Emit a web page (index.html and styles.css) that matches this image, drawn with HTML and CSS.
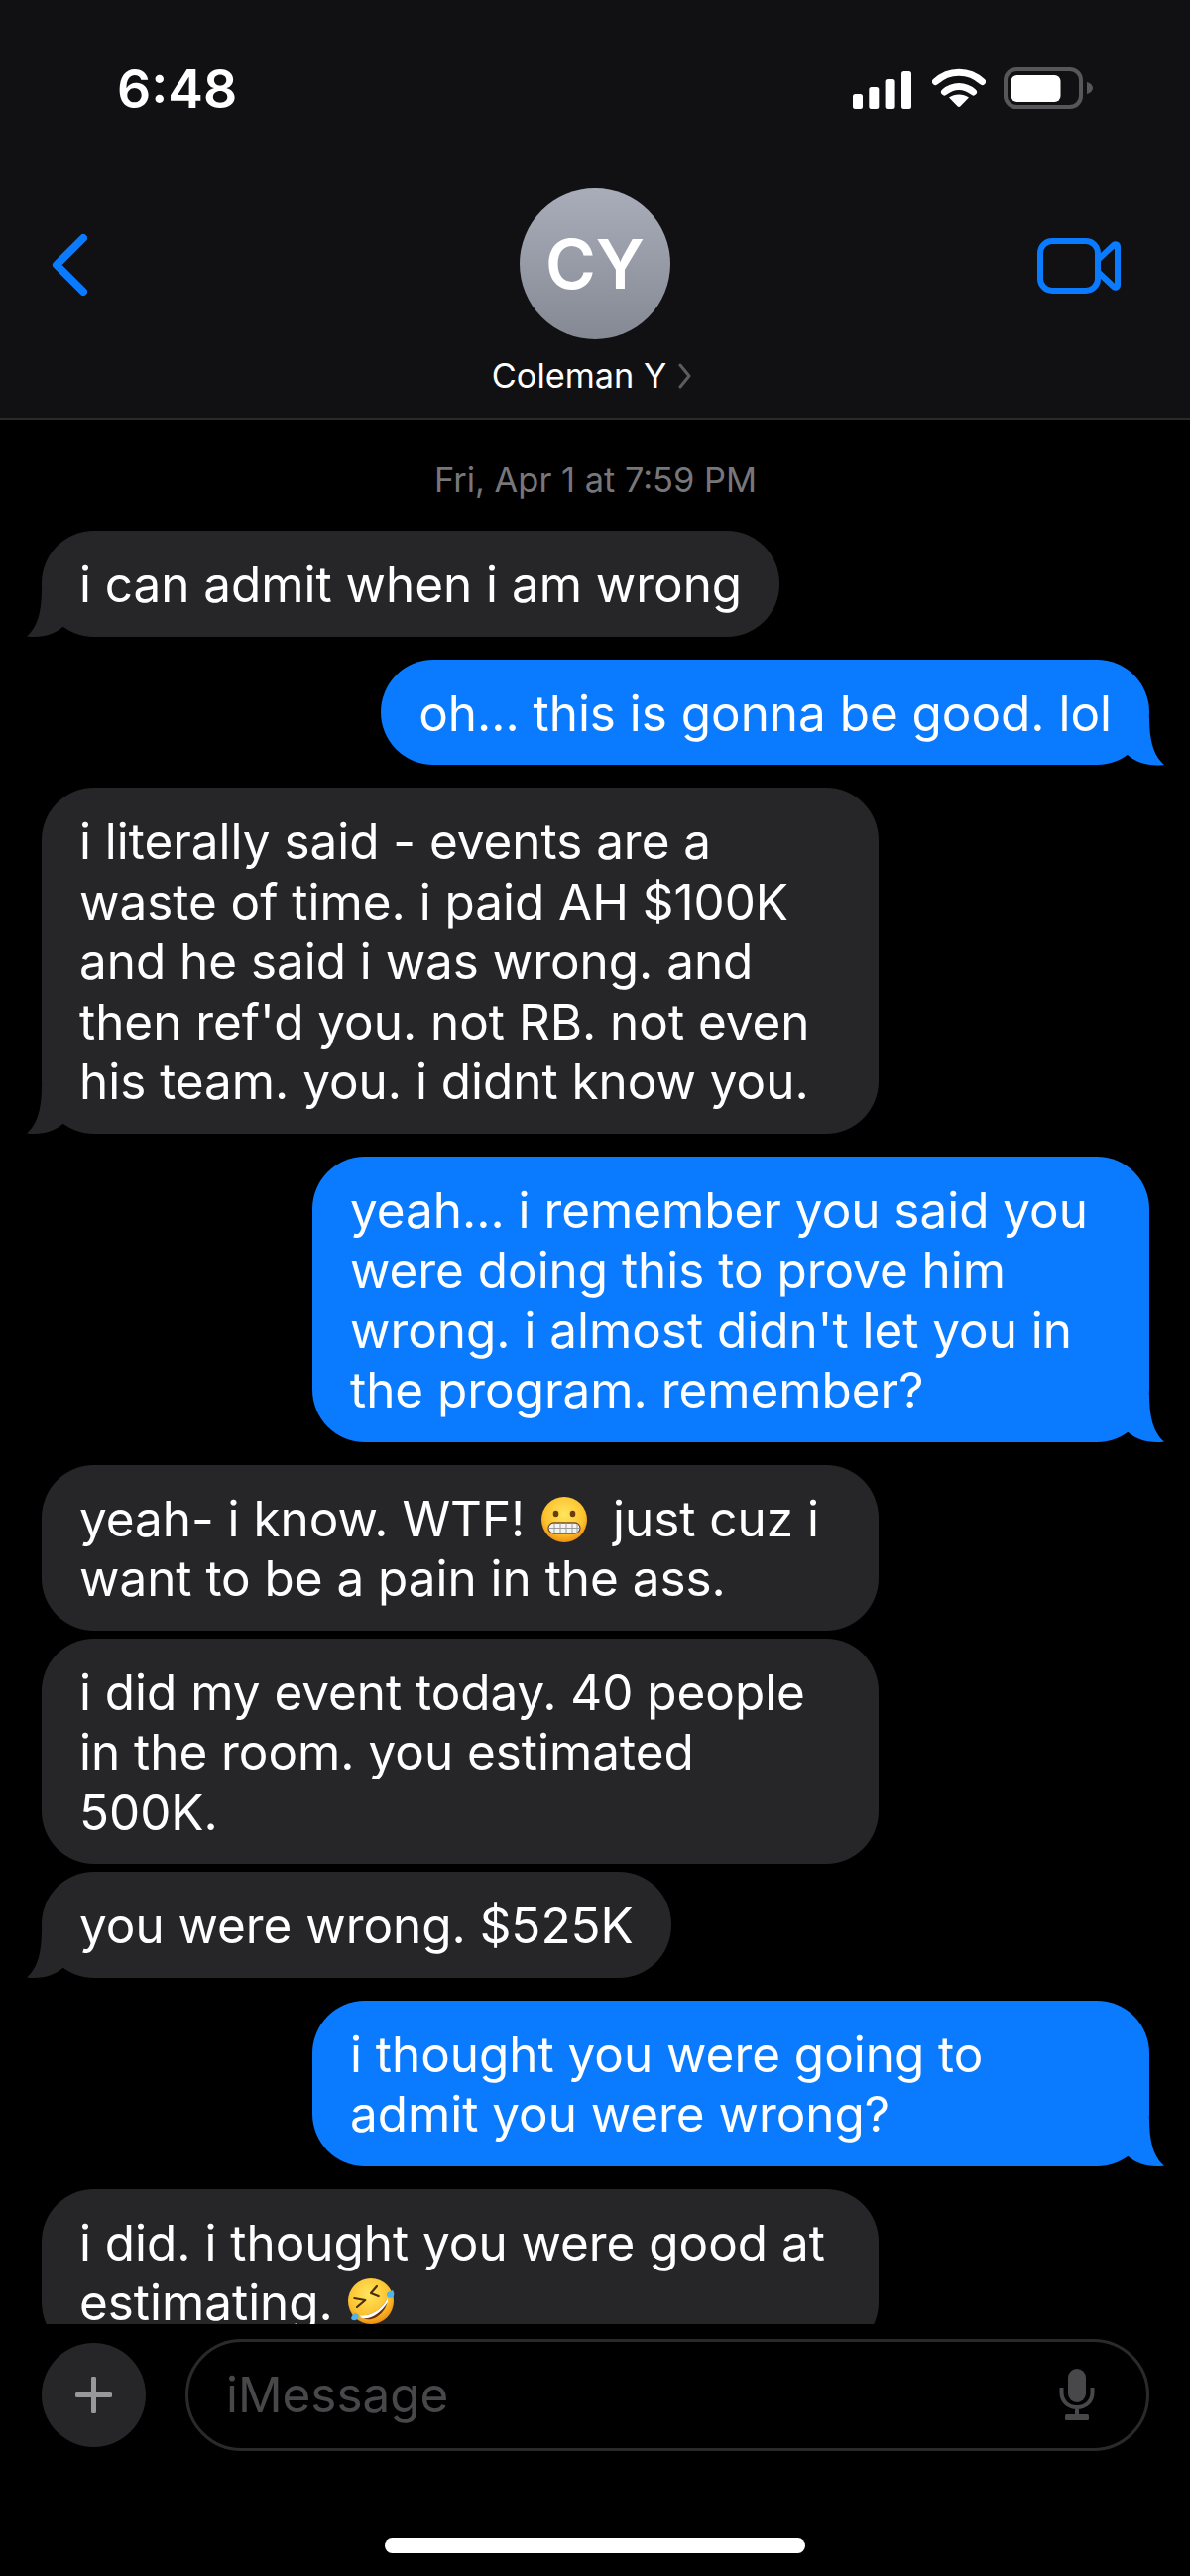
FILE: index.html
```html
<!DOCTYPE html>
<html lang="en">
<head>
<meta charset="utf-8">
<title>Coleman Y</title>
<link rel="stylesheet" href="styles.css">
</head>
<body>
<div class="phone">
  <header class="top">
    <div class="status">
      <span class="time">6:48</span>
      <div class="status-icons">
        <svg class="signal" viewBox="0 0 59 38"><rect x="0" y="23" width="10" height="15" rx="2.5"/><rect x="16.3" y="16" width="10" height="22" rx="2.5"/><rect x="32.6" y="8" width="10" height="30" rx="2.5"/><rect x="49" y="0" width="10" height="38" rx="2.5"/></svg>
        <svg class="wifi" viewBox="0 0 54 40"><path class="wifi-arc" d="M3.5 14.5C17 2 37 2 50.5 14.5"/><path class="wifi-arc" d="M12.5 25C21 17.5 33 17.5 41.5 25"/><path class="wifi-dot" d="M17 30.5C23 26.5 31 26.5 37 30.5L28.5 39.2C27.6 40.2 26.4 40.2 25.5 39.2Z"/></svg>
        <svg class="battery" viewBox="0 0 90 42"><rect class="battery-case" x="2" y="2" width="76" height="38" rx="11"/><rect class="battery-fill" x="7.500" y="8" width="50" height="27" rx="6"/><path class="battery-nub" d="M84 15C88 16 90 18.500 90 21C90 23.500 88 26 84 27Z"/></svg>
      </div>
    </div>
    <nav class="nav">
      <svg class="back" viewBox="0 0 36 62"><path d="M32 4L5 31L32 58"/></svg>
      <div class="contact">
        <div class="avatar">CY</div>
        <div class="name">Coleman Y<svg class="name-chevron" viewBox="0 0 14 26"><path d="M2 2L11 13L2 24"/></svg></div>
      </div>
      <svg class="video" viewBox="0 0 84 56"><rect class="video-body" x="3" y="3" width="58" height="50" rx="12"/><path class="video-lens" d="M61 22L77 7C79 5.500 81 6.500 81 9V47C81 49.500 79 50.500 77 49L61 34Z"/></svg>
    </nav>
  </header>

  <main class="thread">
    <p class="stamp">Fri, Apr 1 at 7:59 PM</p>
    <div class="msg in tail">i can admit when i am wrong</div>
    <div class="msg out tail">oh... this is gonna be good. lol</div>
    <div class="msg in tail">i literally said - events are a waste of time. i paid AH $100K and he said i was wrong. and then ref'd you. not RB. not even his team. you. i didnt know you.</div>
    <div class="msg out tail">yeah... i remember you said you were doing this to prove him wrong. i almost didn't let you in the program. remember?</div>
    <div class="msg in">yeah- i know. WTF! <svg class="emoji grimace" viewBox="0 0 46 46" role="img" aria-label="grimacing face"><defs><radialGradient id="face1" cx="50%" cy="38%" r="62%"><stop offset="0" stop-color="#ffe55e"/><stop offset=".7" stop-color="#fcc22e"/><stop offset="1" stop-color="#ee8f10"/></radialGradient></defs><circle cx="23" cy="23" r="23" fill="url(#face1)"/><ellipse cx="14.500" cy="17" rx="2.800" ry="3.300" fill="#6b3d0c"/><ellipse cx="31.500" cy="17" rx="2.800" ry="3.300" fill="#6b3d0c"/><rect x="7" y="26" width="32" height="11" rx="5.500" fill="#f3f3f3" stroke="#76502a" stroke-width="1.300"/><path d="M7.500 31.500H38.500M13 26.500V36.500M19 26V37M25 26V37M31 26V37M36 27V36" stroke="#9b9b9b" stroke-width="1" fill="none"/></svg> just cuz i want to be a pain in the ass.</div>
    <div class="msg in near">i did my event today. 40 people in the room. you estimated 500K.</div>
    <div class="msg in near tail">you were wrong. $525K</div>
    <div class="msg out tail">i thought you were going to admit you were wrong?</div>
    <div class="msg in">i did. i thought you were good at estimating. <svg class="emoji rofl" viewBox="0 0 48 48" role="img" aria-label="rolling on the floor laughing"><defs><radialGradient id="face2" cx="45%" cy="35%" r="65%"><stop offset="0" stop-color="#ffe55e"/><stop offset=".7" stop-color="#fcc22e"/><stop offset="1" stop-color="#ee8f10"/></radialGradient></defs><circle cx="24" cy="24" r="23" fill="url(#face2)"/><path d="M7.300 21L18.300 23L10 30M30 9L24 16L31.700 19" fill="none" stroke="#4d2e0b" stroke-width="2.200" stroke-linecap="round" stroke-linejoin="round"/><path d="M12 38C24 40 36 32 41 20C42 34 24 50 12 38Z" fill="#6b2f0c"/><path d="M12 38C24 40 36 32 41 20L41 25C35 35 24 43 15 41Z" fill="#fff"/><path d="M46 13C48 16 48 20 44 21C40 21 39 17 41 15Z" fill="#4fb4ee"/><path d="M6 37C10 35 13 38 11 41C9 44 5 44 4 41Z" fill="#4fb4ee"/></svg></div>
  </main>

  <div class="composer">
    <div class="plus"><svg viewBox="0 0 37 37"><path d="M18.500 2V35M2 18.500H35"/></svg></div>
    <div class="field">
      <span class="placeholder">iMessage</span>
      <svg class="mic" viewBox="0 0 36 52"><rect class="mic-head" x="9" y="0" width="18" height="34" rx="9"/><path class="mic-arm" d="M2.500 19V24C2.500 33 9 39 18 39C27 39 33.500 33 33.500 24V19M18 39V47"/><rect class="mic-head" x="6" y="46" width="24" height="6" rx="1.500"/></svg>
    </div>
  </div>
  <div class="home"><span class="home-bar"></span></div>
</div>
</body>
</html>
```

FILE: styles.css
```css
* { box-sizing: border-box; }

html, body {
  margin: 0;
  background: #000;
}

.phone {
  width: 1200px;
  height: 2597px;
  display: flex;
  flex-direction: column;
  overflow: hidden;
  background: #000;
  color: #fff;
  font-family: Inter, "Liberation Sans", sans-serif;
}

/* Header */
.top {
  flex: none;
  height: 423px;
  background: #111113;
  border-bottom: 2px solid #2a2a2c;
}

.status {
  height: 190px;
  padding: 68px 98px 0 118px;
  display: flex;
  justify-content: space-between;
  align-items: flex-start;
}

.time {
  font-size: 53.5px;
  line-height: 44px;
  font-weight: 600;
}

.status-icons {
  display: flex;
  align-items: flex-start;
}

.signal { width: 59px; height: 38px; margin-top: 4px; fill: #fff; }
.wifi { width: 54px; height: 40px; margin-left: 21px; }
.wifi-arc { fill: none; stroke: #fff; stroke-width: 7; stroke-linecap: round; }
.wifi-dot { fill: #fff; }
.battery { width: 90px; height: 42px; margin-left: 18px; }
.battery-case { fill: none; stroke: #57575a; stroke-width: 4; }
.battery-fill { fill: #fff; }
.battery-nub { fill: #57575a; }

.nav {
  display: grid;
  grid-template-columns: 1fr auto 1fr;
  align-items: start;
  padding: 0 52px;
}

.back {
  width: 36px;
  height: 62px;
  margin-top: 46px;
  fill: none;
  stroke: #0a7aff;
  stroke-width: 8;
  stroke-linecap: round;
  stroke-linejoin: round;
}

.contact {
  display: flex;
  flex-direction: column;
  align-items: center;
}

.avatar {
  width: 152px;
  height: 152px;
  border-radius: 50%;
  background: linear-gradient(#a9adb9, #858994);
  display: flex;
  align-items: center;
  justify-content: center;
  font-size: 69px;
  font-weight: 600;
}

.name {
  margin-top: 17px;
  padding-right: 6px;
  font-size: 34.3px;
  line-height: 40px;
  display: flex;
  align-items: center;
  gap: 12px;
}

.name-chevron {
  width: 14px;
  height: 26px;
  fill: none;
  stroke: #5c5c60;
  stroke-width: 3;
  stroke-linecap: round;
  stroke-linejoin: round;
}

.video {
  justify-self: end;
  width: 84px;
  height: 56px;
  margin: 50px 18px 0 0;
  fill: none;
  stroke: #0a7aff;
  stroke-width: 6;
  stroke-linejoin: round;
}

/* Thread */
.thread {
  flex: 1;
  min-height: 0;
  overflow: hidden;
  padding: 41px 41px 0 42px;
  display: flex;
  flex-direction: column;
  align-items: flex-start;
  gap: 23px;
}

.stamp {
  align-self: center;
  margin: 0 0 8px;
  font-size: 34.4px;
  line-height: 40px;
  color: #77777b;
}

.msg {
  position: relative;
  flex: none;
  max-width: 844px;
  padding: 24px 38px 22px;
  border-radius: 53px;
  font-size: 49.4px;
  line-height: 60.5px;
}

.msg.near { margin-top: -15px; }

.in { background: #262628; }
.out { background: #0a7aff; align-self: flex-end; }

.tail::after {
  content: "";
  position: absolute;
  bottom: -2px;
  width: 40px;
  height: 50px;
  clip-path: path("M15 0C15 20 12 38 0 48C15 50 28 46 37 38L37 0Z");
}

.in.tail::after { left: -15px; background: #262628; }
.out.tail::after { right: -15px; background: #0a7aff; transform: scaleX(-1); }

.emoji {
  width: 46px;
  height: 46px;
  vertical-align: -6px;
}

.grimace { margin: 0 12px 0 3px; }
.rofl { width: 48px; height: 48px; vertical-align: -5px; }

/* Composer */
.composer {
  flex: none;
  display: flex;
  align-items: center;
  gap: 40px;
  padding: 15px 41px 0 42px;
}

.plus {
  width: 105px;
  height: 105px;
  flex: none;
  border-radius: 50%;
  background: #262628;
  display: flex;
  align-items: center;
  justify-content: center;
}

.plus svg {
  width: 37px;
  height: 37px;
  fill: none;
  stroke: #98989d;
  stroke-width: 5;
  stroke-linecap: round;
}

.field {
  flex: 1;
  height: 113px;
  border: 3px solid #2a2a2c;
  border-radius: 57px;
  display: flex;
  align-items: center;
  justify-content: space-between;
  padding: 0 52px 2px 38px;
}

.placeholder {
  font-size: 49.4px;
  color: #48484a;
}

.mic { width: 36px; height: 52px; }
.mic-head { fill: #48484a; }
.mic-arm { fill: none; stroke: #48484a; stroke-width: 4; }

.home {
  flex: none;
  height: 126px;
  display: flex;
  align-items: flex-end;
  justify-content: center;
  padding-bottom: 23px;
}

.home-bar {
  width: 424px;
  height: 15px;
  border-radius: 8px;
  background: #fff;
}
```
